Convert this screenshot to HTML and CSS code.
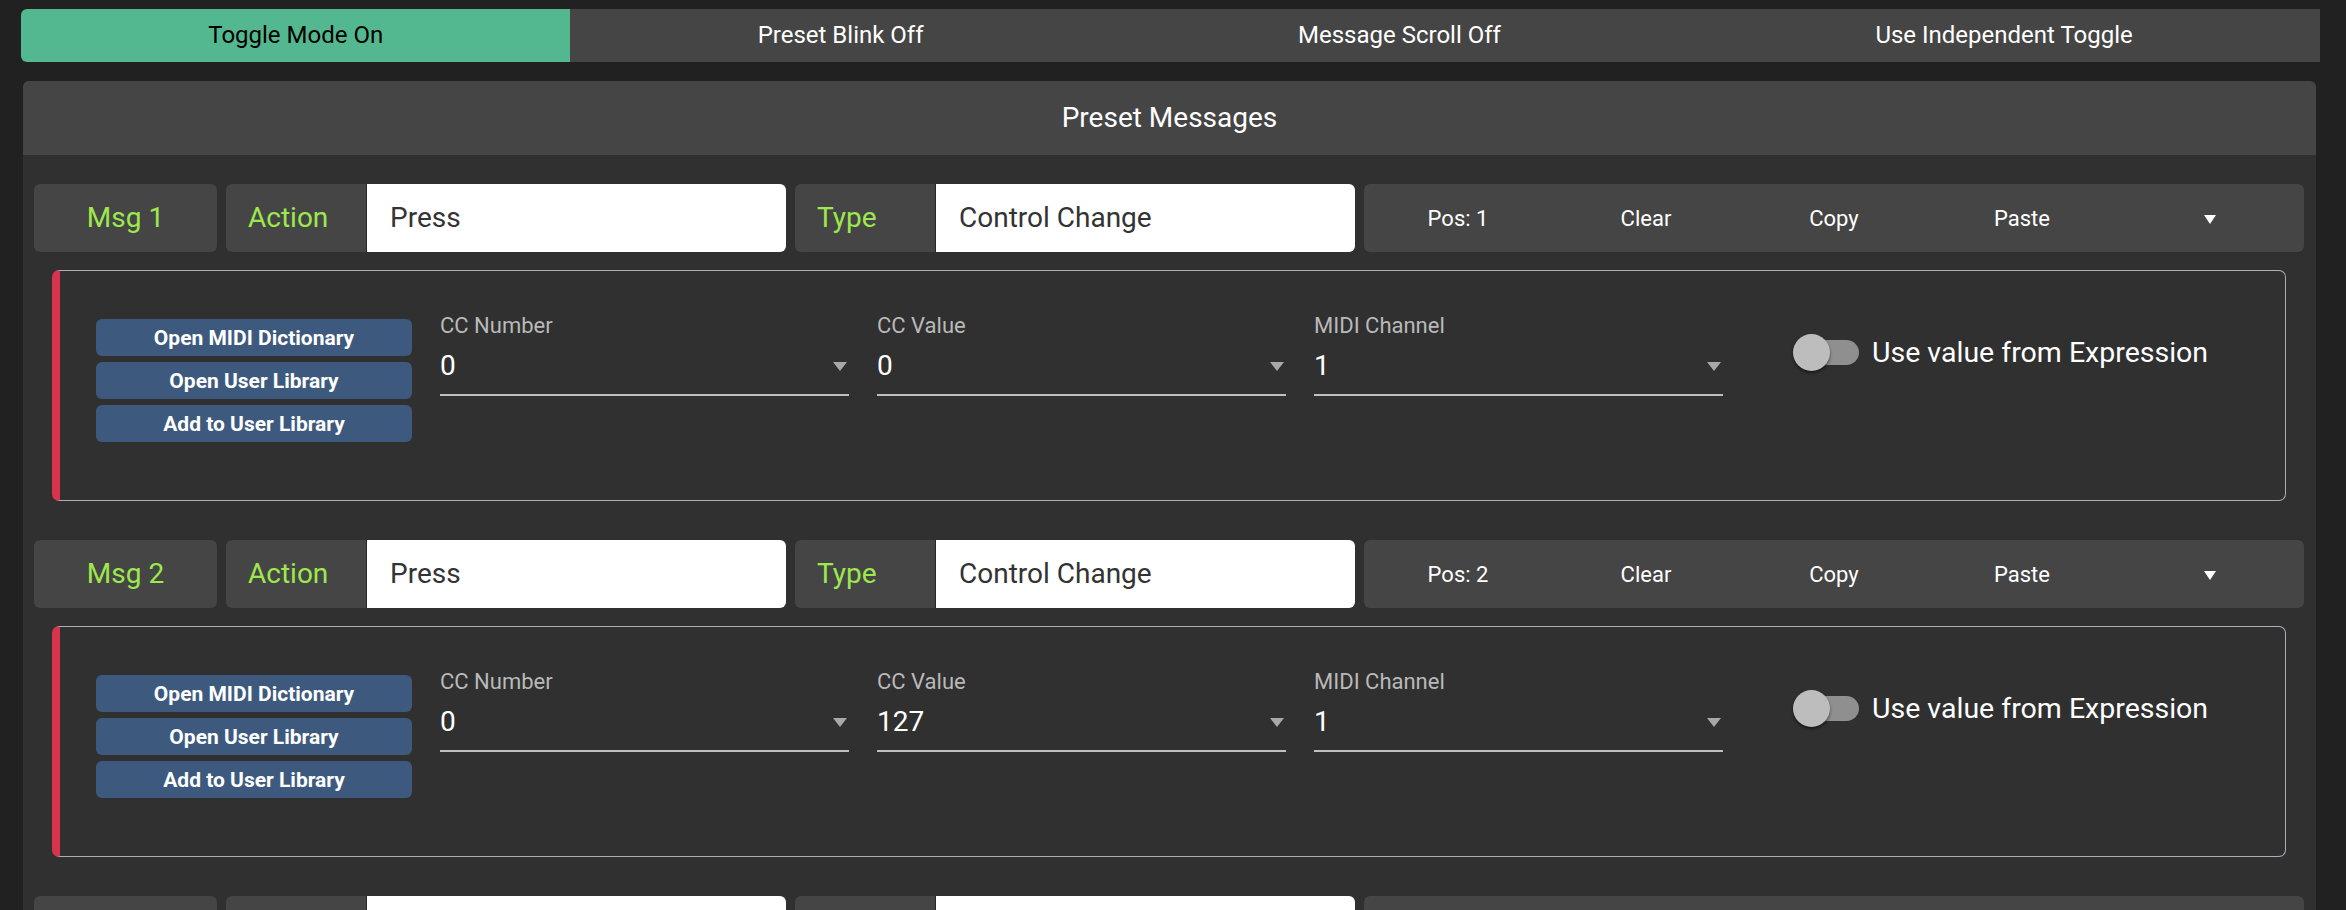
FILE: index.html
```html
<!DOCTYPE html>
<html lang="en">

<head>
    <meta charset="UTF-8">
    <meta name="viewport" content="width=device-width, initial-scale=1.0">
    <title>Preset Messages</title>
    <link rel="stylesheet" href="styles.css">
</head>

<body>
    <div class="page">
        <div class="tabs">
            <div class="tab tab-on">Toggle Mode On</div>
            <div class="tab">Preset Blink Off</div>
            <div class="tab">Message Scroll Off</div>
            <div class="tab">Use Independent Toggle</div>
        </div>

        <div class="panel">
            <div class="panel-head">Preset Messages</div>
            <div class="panel-body">

                <div class="msg">
                    <div class="msg-row">
                        <div class="msg-label">Msg 1</div>
                        <div class="field-group">
                            <div class="field-name">Action</div>
                            <div class="field-value">Press</div>
                        </div>
                        <div class="field-group">
                            <div class="field-name">Type</div>
                            <div class="field-value">Control Change</div>
                        </div>
                        <div class="msg-tools">
                            <span>Pos: 1</span>
                            <span>Clear</span>
                            <span>Copy</span>
                            <span>Paste</span>
                            <span><i class="caret"></i></span>
                        </div>
                    </div>
                    <div class="msg-card">
                        <div class="lib-buttons">
                            <button class="lib-btn">Open MIDI Dictionary</button>
                            <button class="lib-btn">Open User Library</button>
                            <button class="lib-btn">Add to User Library</button>
                        </div>
                        <div class="select">
                            <div class="select-label">CC Number</div>
                            <div class="select-value">0<i class="arrow"></i></div>
                        </div>
                        <div class="select">
                            <div class="select-label">CC Value</div>
                            <div class="select-value">0<i class="arrow"></i></div>
                        </div>
                        <div class="select">
                            <div class="select-label">MIDI Channel</div>
                            <div class="select-value">1<i class="arrow"></i></div>
                        </div>
                        <div class="expr">
                            <div class="switch"><span class="track"></span><span class="thumb"></span></div>
                            <span class="expr-text">Use value from Expression</span>
                        </div>
                    </div>
                </div>

                <div class="msg">
                    <div class="msg-row">
                        <div class="msg-label">Msg 2</div>
                        <div class="field-group">
                            <div class="field-name">Action</div>
                            <div class="field-value">Press</div>
                        </div>
                        <div class="field-group">
                            <div class="field-name">Type</div>
                            <div class="field-value">Control Change</div>
                        </div>
                        <div class="msg-tools">
                            <span>Pos: 2</span>
                            <span>Clear</span>
                            <span>Copy</span>
                            <span>Paste</span>
                            <span><i class="caret"></i></span>
                        </div>
                    </div>
                    <div class="msg-card">
                        <div class="lib-buttons">
                            <button class="lib-btn">Open MIDI Dictionary</button>
                            <button class="lib-btn">Open User Library</button>
                            <button class="lib-btn">Add to User Library</button>
                        </div>
                        <div class="select">
                            <div class="select-label">CC Number</div>
                            <div class="select-value">0<i class="arrow"></i></div>
                        </div>
                        <div class="select">
                            <div class="select-label">CC Value</div>
                            <div class="select-value">127<i class="arrow"></i></div>
                        </div>
                        <div class="select">
                            <div class="select-label">MIDI Channel</div>
                            <div class="select-value">1<i class="arrow"></i></div>
                        </div>
                        <div class="expr">
                            <div class="switch"><span class="track"></span><span class="thumb"></span></div>
                            <span class="expr-text">Use value from Expression</span>
                        </div>
                    </div>
                </div>

                <!-- next message row, only its top edge is in view -->
                <div class="msg">
                    <div class="msg-row">
                        <div class="msg-label"></div>
                        <div class="field-group">
                            <div class="field-name"></div>
                            <div class="field-value"></div>
                        </div>
                        <div class="field-group">
                            <div class="field-name"></div>
                            <div class="field-value"></div>
                        </div>
                        <div class="msg-tools"></div>
                    </div>
                </div>

            </div>
        </div>
    </div>
</body>

</html>
```

FILE: styles.css
```css
html,
body {
    margin: 0;
    background-color: #212121;
    font-family: Roboto, "Liberation Sans", sans-serif;
    color: #fff;
}

.page {
    height: 100vh;
    overflow: hidden;
}

.tabs {
    display: flex;
    margin: 9px 26px 0 21px;
    height: 53px;
}

.tab {
    flex: 1 1 auto;
    background-color: #454545;
    font-size: 24px;
    line-height: 53px;
    text-align: center;
    white-space: nowrap;
}

.tab-on {
    background-color: #53b890;
    color: #000;
    border-radius: 6px 0 0 6px;
}

.panel {
    margin: 19px 30px 0 23px;
    background-color: #303030;
    border-radius: 6px 6px 0 0;
}

.panel-head {
    height: 74px;
    line-height: 74px;
    background-color: #454545;
    border-radius: 6px 6px 0 0;
    font-size: 28px;
    text-align: center;
}

.panel-body {
    padding: 29px 12px 0 11px;
}

.msg {
    margin-bottom: 39px;
}

.msg-row {
    display: flex;
    gap: 9px;
    height: 68px;
    font-size: 28px;
}

.msg-label {
    width: 183px;
    background-color: #454545;
    border-radius: 6px;
    color: #9de84d;
    line-height: 68px;
    text-align: center;
}

.field-group {
    display: flex;
    width: 560px;
    border-radius: 6px;
    overflow: hidden;
}

.field-name {
    width: 118px;
    padding-left: 22px;
    background-color: #454545;
    border-right: 1px solid #262626;
    color: #9de84d;
    line-height: 68px;
}

.field-value {
    flex: 1;
    padding-left: 23px;
    background-color: #fff;
    color: #333;
    line-height: 68px;
}

.msg-tools {
    flex: 1;
    display: grid;
    grid-template-columns: repeat(5, 1fr);
    align-items: center;
    background-color: #454545;
    border-radius: 6px;
    font-size: 22px;
    text-align: center;
}

.caret {
    display: inline-block;
    border-left: 6.5px solid transparent;
    border-right: 6.5px solid transparent;
    border-top: 9px solid #fff;
    vertical-align: middle;
}

.msg-card {
    display: flex;
    align-items: flex-start;
    gap: 28px;
    box-sizing: border-box;
    height: 231px;
    margin: 18px 18px 0 18px;
    padding: 42px 0 0 36px;
    border: 1px solid #a9aeb9;
    border-left: 8px solid #d8334d;
    border-radius: 7px;
}

.lib-buttons {
    display: flex;
    flex-direction: column;
    gap: 6px;
    width: 316px;
    margin-top: 6px;
}

.lib-btn {
    height: 37px;
    padding: 0;
    border: none;
    border-radius: 6px;
    background-color: #3d5a7e;
    color: #fff;
    font-family: Roboto, "Liberation Sans", sans-serif;
    font-size: 21px;
    font-weight: bold;
}

.select {
    width: 409px;
}

.select-label {
    font-size: 22px;
    line-height: 26px;
    color: #b9b9b9;
}

.select-value {
    display: flex;
    justify-content: space-between;
    align-items: center;
    margin-top: 9px;
    padding: 0 2px 10px 0;
    border-bottom: 2px solid #bfbfbf;
    font-size: 28px;
    line-height: 36px;
}

.arrow {
    border-left: 7.5px solid transparent;
    border-right: 7.5px solid transparent;
    border-top: 9px solid #a8a8a8;
}

.expr {
    display: flex;
    align-items: center;
    margin: 21px 0 0 42px;
}

.switch {
    position: relative;
    width: 66px;
    height: 37px;
}

.track {
    position: absolute;
    left: 7px;
    top: 6px;
    width: 59px;
    height: 25px;
    border-radius: 13px;
    background-color: #8f8f8f;
}

.thumb {
    position: absolute;
    left: 0;
    top: 0;
    width: 37px;
    height: 37px;
    border-radius: 50%;
    background-color: #bdbdbd;
    box-shadow: 0 2px 3px rgba(0, 0, 0, 0.5);
}

.expr-text {
    margin-left: 13px;
    font-size: 28.5px;
    white-space: nowrap;
}
```
